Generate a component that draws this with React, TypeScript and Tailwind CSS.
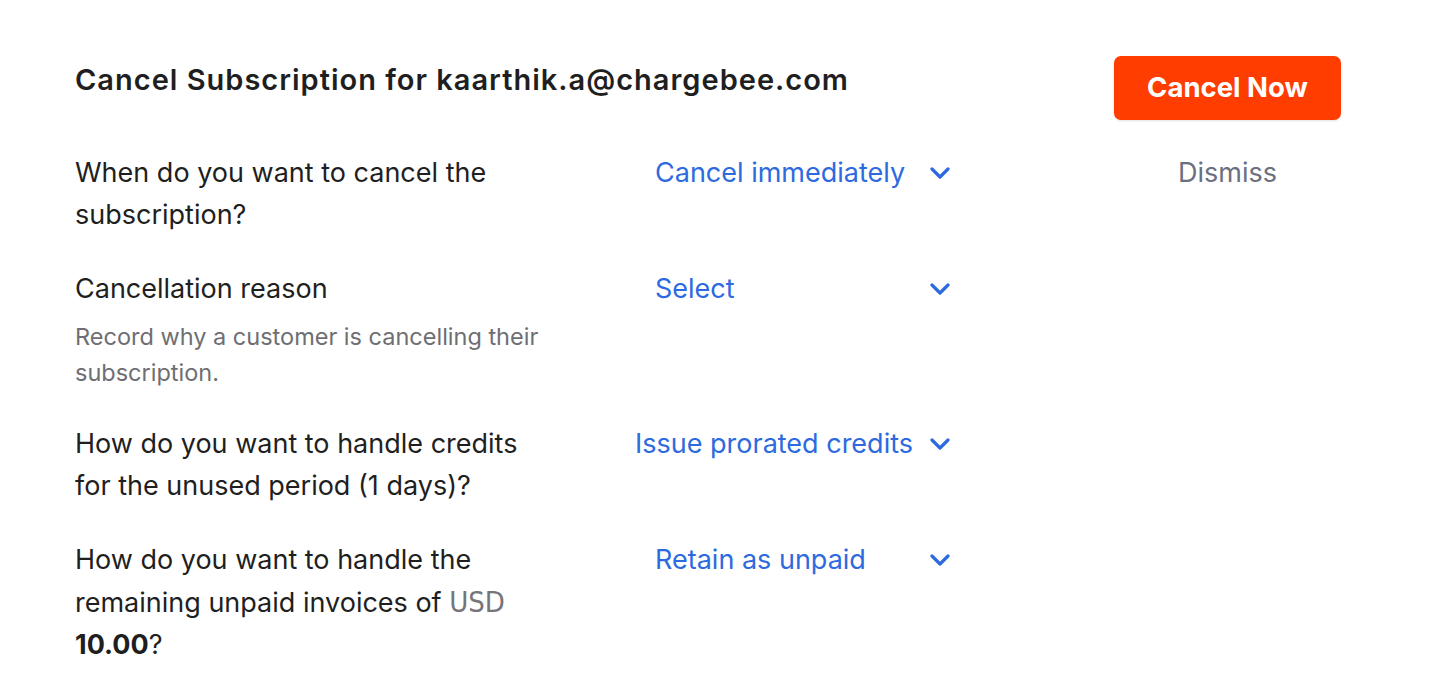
import React from 'react';

const FONT = { fontFamily: 'Inter, "Noto Sans", sans-serif' };

function Chevron() {
    return (
        <svg width="20" height="12" viewBox="0 0 20 12" className="shrink-0">
            <polyline points="2,2 10,10 18,2" fill="none" stroke="#2d6ae0" strokeWidth="3.2" strokeLinecap="round" strokeLinejoin="round" />
        </svg>
    );
}

function SelectBox({ value }: { value: string }) {
    return (
        <div className="ml-auto w-[320px] flex items-center justify-end gap-[17px] leading-[42px] text-[27px] text-[#2d6ae0] cursor-pointer">
            <span className="min-w-[258px] whitespace-nowrap">{value}</span>
            <Chevron />
        </div>
    );
}

function Row({ label, hint, value }: { label: React.ReactNode; hint?: string; value: string }) {
    return (
        <div className="flex items-start">
            <div className="w-[478px] shrink-0">
                <div className="text-[27px] leading-[42px] text-[#1f1f22]">{label}</div>
                {hint && <div className="text-[23.5px] leading-[36px] text-[#6e6e73] mt-[9px]">{hint}</div>}
            </div>
            <SelectBox value={value} />
        </div>
    );
}

export default function App() {
    return (
        <div className="min-h-screen bg-white pl-[75px] pr-[93px] pt-[56px]" style={FONT}>
            {/* Header */}
            <div className="flex items-start justify-between">
                <h1 className="mt-[6px] text-[29px] leading-[36px] font-semibold tracking-[1px] text-[#1f1f22]">
                    Cancel Subscription for kaarthik.a@chargebee.com
                </h1>
                <button className="w-[227px] h-[64px] rounded-[7px] bg-[#ff3d00] text-white text-[27.5px] font-bold shadow-sm">
                    Cancel Now
                </button>
            </div>

            {/* Body */}
            <div className="flex items-start mt-[32px]">
                <div className="w-[875px] flex flex-col gap-[32px]">
                    <Row label="When do you want to cancel the subscription?" value="Cancel immediately" />
                    <Row
                        label="Cancellation reason"
                        hint="Record why a customer is cancelling their subscription."
                        value="Select"
                    />
                    <Row label="How do you want to handle credits for the unused period (1 days)?" value="Issue prorated credits" />
                    <Row
                        label={
                            <>
                                How do you want to handle the remaining unpaid invoices of{' '}
                                <span className="text-[#75757a] text-[29px] leading-[42px]" style={{ fontFamily: '"DejaVu Sans Condensed", "Liberation Sans Narrow", sans-serif' }}>USD</span>{' '}
                                <span className="font-bold">10.00</span>?
                            </>
                        }
                        value="Retain as unpaid"
                    />
                </div>
                <div className="ml-auto w-[227px] text-center text-[27px] leading-[42px] text-[#6b6f80]">
                    <button>Dismiss</button>
                </div>
            </div>
        </div>
    );
}
